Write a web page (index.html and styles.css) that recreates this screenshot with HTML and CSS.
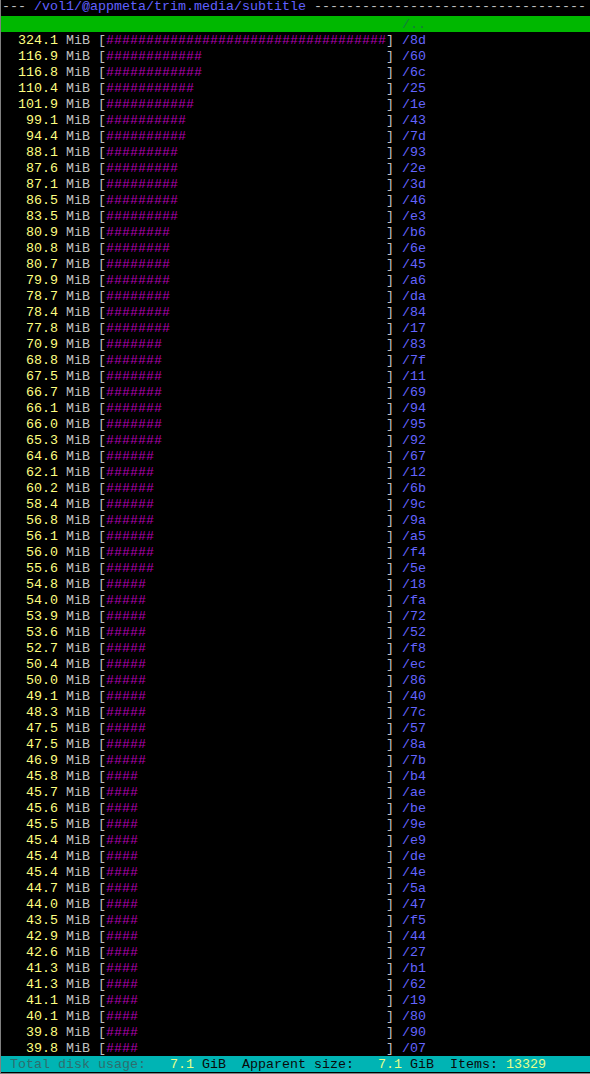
FILE: index.html
```html
<!DOCTYPE html>
<html>
<head>
<meta charset="utf-8">
<link rel="stylesheet" href="styles.css">
</head>
<body>
<div class="screen">
  <div class="row head"><span class="dash">--- </span><span class="path">/vol1/@appmeta/trim.media/subtitle</span><span class="dash"> ----------------------------------</span></div>
  <div class="row up"><span class="pad50"></span><span class="upname">/..</span></div>
  <div class="list">
    <div class="row"><span class="size">324.1</span> <span class="unit">MiB</span> [<span class="bar">###################################</span>] <span class="name">/8d</span></div>
    <div class="row"><span class="size">116.9</span> <span class="unit">MiB</span> [<span class="bar">############</span>] <span class="name">/60</span></div>
    <div class="row"><span class="size">116.8</span> <span class="unit">MiB</span> [<span class="bar">############</span>] <span class="name">/6c</span></div>
    <div class="row"><span class="size">110.4</span> <span class="unit">MiB</span> [<span class="bar">###########</span>] <span class="name">/25</span></div>
    <div class="row"><span class="size">101.9</span> <span class="unit">MiB</span> [<span class="bar">###########</span>] <span class="name">/1e</span></div>
    <div class="row"><span class="size">99.1</span> <span class="unit">MiB</span> [<span class="bar">##########</span>] <span class="name">/43</span></div>
    <div class="row"><span class="size">94.4</span> <span class="unit">MiB</span> [<span class="bar">##########</span>] <span class="name">/7d</span></div>
    <div class="row"><span class="size">88.1</span> <span class="unit">MiB</span> [<span class="bar">#########</span>] <span class="name">/93</span></div>
    <div class="row"><span class="size">87.6</span> <span class="unit">MiB</span> [<span class="bar">#########</span>] <span class="name">/2e</span></div>
    <div class="row"><span class="size">87.1</span> <span class="unit">MiB</span> [<span class="bar">#########</span>] <span class="name">/3d</span></div>
    <div class="row"><span class="size">86.5</span> <span class="unit">MiB</span> [<span class="bar">#########</span>] <span class="name">/46</span></div>
    <div class="row"><span class="size">83.5</span> <span class="unit">MiB</span> [<span class="bar">#########</span>] <span class="name">/e3</span></div>
    <div class="row"><span class="size">80.9</span> <span class="unit">MiB</span> [<span class="bar">########</span>] <span class="name">/b6</span></div>
    <div class="row"><span class="size">80.8</span> <span class="unit">MiB</span> [<span class="bar">########</span>] <span class="name">/6e</span></div>
    <div class="row"><span class="size">80.7</span> <span class="unit">MiB</span> [<span class="bar">########</span>] <span class="name">/45</span></div>
    <div class="row"><span class="size">79.9</span> <span class="unit">MiB</span> [<span class="bar">########</span>] <span class="name">/a6</span></div>
    <div class="row"><span class="size">78.7</span> <span class="unit">MiB</span> [<span class="bar">########</span>] <span class="name">/da</span></div>
    <div class="row"><span class="size">78.4</span> <span class="unit">MiB</span> [<span class="bar">########</span>] <span class="name">/84</span></div>
    <div class="row"><span class="size">77.8</span> <span class="unit">MiB</span> [<span class="bar">########</span>] <span class="name">/17</span></div>
    <div class="row"><span class="size">70.9</span> <span class="unit">MiB</span> [<span class="bar">#######</span>] <span class="name">/83</span></div>
    <div class="row"><span class="size">68.8</span> <span class="unit">MiB</span> [<span class="bar">#######</span>] <span class="name">/7f</span></div>
    <div class="row"><span class="size">67.5</span> <span class="unit">MiB</span> [<span class="bar">#######</span>] <span class="name">/11</span></div>
    <div class="row"><span class="size">66.7</span> <span class="unit">MiB</span> [<span class="bar">#######</span>] <span class="name">/69</span></div>
    <div class="row"><span class="size">66.1</span> <span class="unit">MiB</span> [<span class="bar">#######</span>] <span class="name">/94</span></div>
    <div class="row"><span class="size">66.0</span> <span class="unit">MiB</span> [<span class="bar">#######</span>] <span class="name">/95</span></div>
    <div class="row"><span class="size">65.3</span> <span class="unit">MiB</span> [<span class="bar">#######</span>] <span class="name">/92</span></div>
    <div class="row"><span class="size">64.6</span> <span class="unit">MiB</span> [<span class="bar">######</span>] <span class="name">/67</span></div>
    <div class="row"><span class="size">62.1</span> <span class="unit">MiB</span> [<span class="bar">######</span>] <span class="name">/12</span></div>
    <div class="row"><span class="size">60.2</span> <span class="unit">MiB</span> [<span class="bar">######</span>] <span class="name">/6b</span></div>
    <div class="row"><span class="size">58.4</span> <span class="unit">MiB</span> [<span class="bar">######</span>] <span class="name">/9c</span></div>
    <div class="row"><span class="size">56.8</span> <span class="unit">MiB</span> [<span class="bar">######</span>] <span class="name">/9a</span></div>
    <div class="row"><span class="size">56.1</span> <span class="unit">MiB</span> [<span class="bar">######</span>] <span class="name">/a5</span></div>
    <div class="row"><span class="size">56.0</span> <span class="unit">MiB</span> [<span class="bar">######</span>] <span class="name">/f4</span></div>
    <div class="row"><span class="size">55.6</span> <span class="unit">MiB</span> [<span class="bar">######</span>] <span class="name">/5e</span></div>
    <div class="row"><span class="size">54.8</span> <span class="unit">MiB</span> [<span class="bar">#####</span>] <span class="name">/18</span></div>
    <div class="row"><span class="size">54.0</span> <span class="unit">MiB</span> [<span class="bar">#####</span>] <span class="name">/fa</span></div>
    <div class="row"><span class="size">53.9</span> <span class="unit">MiB</span> [<span class="bar">#####</span>] <span class="name">/72</span></div>
    <div class="row"><span class="size">53.6</span> <span class="unit">MiB</span> [<span class="bar">#####</span>] <span class="name">/52</span></div>
    <div class="row"><span class="size">52.7</span> <span class="unit">MiB</span> [<span class="bar">#####</span>] <span class="name">/f8</span></div>
    <div class="row"><span class="size">50.4</span> <span class="unit">MiB</span> [<span class="bar">#####</span>] <span class="name">/ec</span></div>
    <div class="row"><span class="size">50.0</span> <span class="unit">MiB</span> [<span class="bar">#####</span>] <span class="name">/86</span></div>
    <div class="row"><span class="size">49.1</span> <span class="unit">MiB</span> [<span class="bar">#####</span>] <span class="name">/40</span></div>
    <div class="row"><span class="size">48.3</span> <span class="unit">MiB</span> [<span class="bar">#####</span>] <span class="name">/7c</span></div>
    <div class="row"><span class="size">47.5</span> <span class="unit">MiB</span> [<span class="bar">#####</span>] <span class="name">/57</span></div>
    <div class="row"><span class="size">47.5</span> <span class="unit">MiB</span> [<span class="bar">#####</span>] <span class="name">/8a</span></div>
    <div class="row"><span class="size">46.9</span> <span class="unit">MiB</span> [<span class="bar">#####</span>] <span class="name">/7b</span></div>
    <div class="row"><span class="size">45.8</span> <span class="unit">MiB</span> [<span class="bar">####</span>] <span class="name">/b4</span></div>
    <div class="row"><span class="size">45.7</span> <span class="unit">MiB</span> [<span class="bar">####</span>] <span class="name">/ae</span></div>
    <div class="row"><span class="size">45.6</span> <span class="unit">MiB</span> [<span class="bar">####</span>] <span class="name">/be</span></div>
    <div class="row"><span class="size">45.5</span> <span class="unit">MiB</span> [<span class="bar">####</span>] <span class="name">/9e</span></div>
    <div class="row"><span class="size">45.4</span> <span class="unit">MiB</span> [<span class="bar">####</span>] <span class="name">/e9</span></div>
    <div class="row"><span class="size">45.4</span> <span class="unit">MiB</span> [<span class="bar">####</span>] <span class="name">/de</span></div>
    <div class="row"><span class="size">45.4</span> <span class="unit">MiB</span> [<span class="bar">####</span>] <span class="name">/4e</span></div>
    <div class="row"><span class="size">44.7</span> <span class="unit">MiB</span> [<span class="bar">####</span>] <span class="name">/5a</span></div>
    <div class="row"><span class="size">44.0</span> <span class="unit">MiB</span> [<span class="bar">####</span>] <span class="name">/47</span></div>
    <div class="row"><span class="size">43.5</span> <span class="unit">MiB</span> [<span class="bar">####</span>] <span class="name">/f5</span></div>
    <div class="row"><span class="size">42.9</span> <span class="unit">MiB</span> [<span class="bar">####</span>] <span class="name">/44</span></div>
    <div class="row"><span class="size">42.6</span> <span class="unit">MiB</span> [<span class="bar">####</span>] <span class="name">/27</span></div>
    <div class="row"><span class="size">41.3</span> <span class="unit">MiB</span> [<span class="bar">####</span>] <span class="name">/b1</span></div>
    <div class="row"><span class="size">41.3</span> <span class="unit">MiB</span> [<span class="bar">####</span>] <span class="name">/62</span></div>
    <div class="row"><span class="size">41.1</span> <span class="unit">MiB</span> [<span class="bar">####</span>] <span class="name">/19</span></div>
    <div class="row"><span class="size">40.1</span> <span class="unit">MiB</span> [<span class="bar">####</span>] <span class="name">/80</span></div>
    <div class="row"><span class="size">39.8</span> <span class="unit">MiB</span> [<span class="bar">####</span>] <span class="name">/90</span></div>
    <div class="row"><span class="size">39.8</span> <span class="unit">MiB</span> [<span class="bar">####</span>] <span class="name">/07</span></div>
  </div>
  <div class="row status"> <span class="slabel">Total disk usage:</span>   <span class="sval">7.1</span> GiB  Apparent size:   <span class="sval">7.1</span> GiB  Items: <span class="sval">13329</span></div>
</div>
</body>
</html>
```

FILE: styles.css
```css
html, body {
  margin: 0;
  padding: 0;
  background: #000;
}

.screen {
  width: 590px;
  height: 1074px;
  box-sizing: border-box;
  border-left: 1px solid #808080;
  border-bottom: 1px solid #808080;
  padding-bottom: 1px;
  overflow: hidden;
  font-family: "Liberation Mono", "Courier New", monospace;
  font-size: 13.333px;
  line-height: 16px;
  color: #c0c0c0;
  background: #000;
}

.row {
  height: 16px;
  box-sizing: border-box;
  padding-left: 1px;
  padding-top: 1px;
  line-height: 15px;
  white-space: pre;
  overflow: hidden;
}

.head {
  padding-top: 0;
  line-height: 14px;
}

.head .dash {
  color: #c0c0c0;
}

.head .path {
  color: #6060ff;
}

.up {
  background: #00b800;
}

.pad50 {
  display: inline-block;
  width: 50ch;
}

.upname {
  color: #137c3c;
}

.size {
  display: inline-block;
  width: 7ch;
  text-align: right;
  color: #ffff80;
}

.unit {
  color: #c0c0c0;
}

.bar {
  display: inline-block;
  width: 35ch;
  color: #b000b0;
}

.name {
  color: #6464ff;
}

.status {
  background: #00b4b4;
  color: #0a0a0a;
}

.slabel {
  color: #2e6e6e;
}

.sval {
  color: #e6ff8c;
}
```
